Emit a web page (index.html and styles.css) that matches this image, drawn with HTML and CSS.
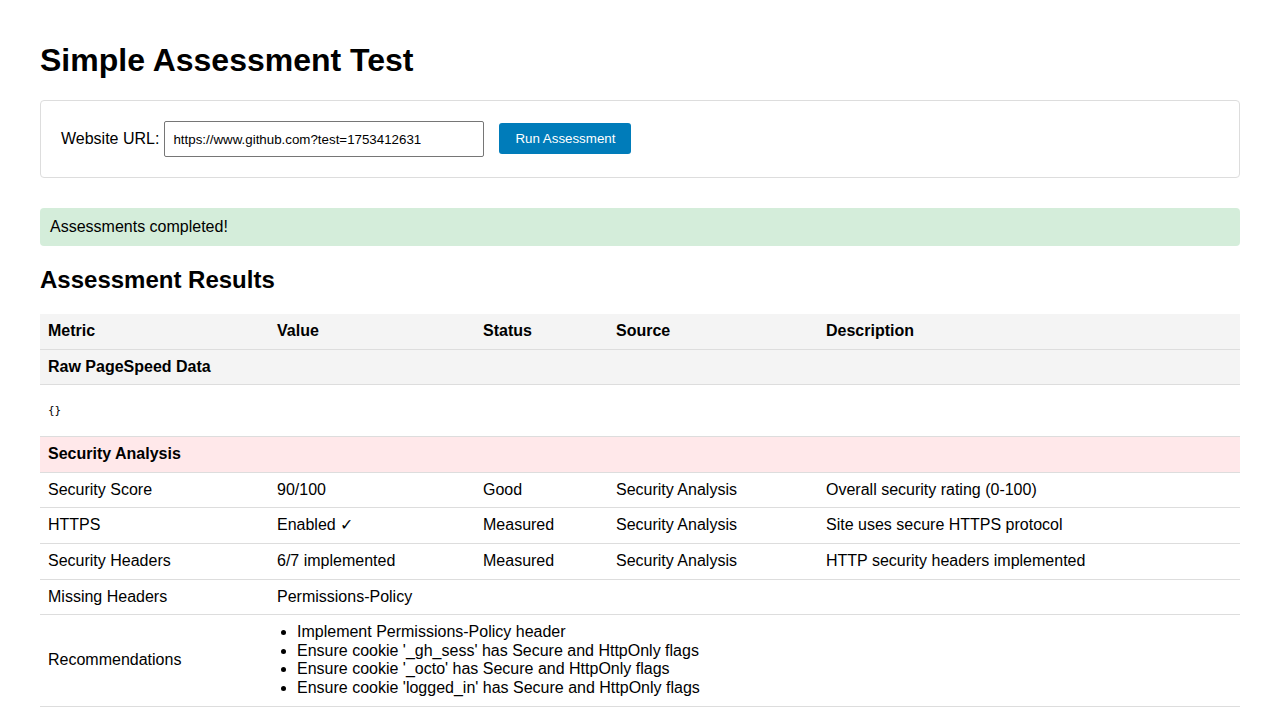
FILE: index.html
```html
<!DOCTYPE html>
<html lang="en">
<head>
<meta charset="utf-8">
<title>Simple Assessment Test</title>
<link rel="stylesheet" href="styles.css">
</head>
<body>
<div class="page">
  <h1 class="title">Simple Assessment Test</h1>
  <form class="form-box">
    <label class="url-label" for="url">Website URL:</label>
    <input class="url-input" id="url" type="text" value="https://www.github.com?test=1753412631">
    <button class="run-btn" type="button">Run Assessment</button>
  </form>
  <div class="success">Assessments completed!</div>
  <h2 class="subtitle">Assessment Results</h2>
  <table class="results">
    <colgroup>
      <col class="c-metric">
      <col class="c-value">
      <col class="c-status">
      <col class="c-source">
      <col class="c-desc">
    </colgroup>
    <thead>
      <tr><th>Metric</th><th>Value</th><th>Status</th><th>Source</th><th>Description</th></tr>
    </thead>
    <tbody>
      <tr class="section section-raw"><td colspan="5">Raw PageSpeed Data</td></tr>
      <tr><td colspan="5"><pre class="raw">{}</pre></td></tr>
      <tr class="section section-security"><td colspan="5">Security Analysis</td></tr>
      <tr><td>Security Score</td><td>90/100</td><td>Good</td><td>Security Analysis</td><td>Overall security rating (0-100)</td></tr>
      <tr><td>HTTPS</td><td>Enabled ✓</td><td>Measured</td><td>Security Analysis</td><td>Site uses secure HTTPS protocol</td></tr>
      <tr><td>Security Headers</td><td>6/7 implemented</td><td>Measured</td><td>Security Analysis</td><td>HTTP security headers implemented</td></tr>
      <tr><td>Missing Headers</td><td>Permissions-Policy</td><td></td><td></td><td></td></tr>
      <tr>
        <td>Recommendations</td>
        <td colspan="4">
          <ul class="recs">
            <li>Implement Permissions-Policy header</li>
            <li>Ensure cookie '_gh_sess' has Secure and HttpOnly flags</li>
            <li>Ensure cookie '_octo' has Secure and HttpOnly flags</li>
            <li>Ensure cookie 'logged_in' has Secure and HttpOnly flags</li>
          </ul>
        </td>
      </tr>
    </tbody>
  </table>
</div>
</body>
</html>
```

FILE: styles.css
```css
html, body {
  margin: 0;
  padding: 0;
  background: #fff;
  color: #000;
  font-family: "Liberation Sans", Arial, sans-serif;
  font-size: 16px;
}

.page {
  padding: 0 40px 40px;
}

.title {
  font-size: 32px;
  font-weight: bold;
  margin: 42px 0 21px;
}

.form-box {
  border: 1px solid #ddd;
  border-radius: 4px;
  padding: 20px;
  margin: 0 0 30px;
  display: flex;
  align-items: center;
}

.url-label {
  margin-right: 5px;
}

.url-input {
  box-sizing: border-box;
  width: 320px;
  height: 36px;
  padding: 0 8px;
  font-family: "Liberation Sans", Arial, sans-serif;
  font-size: 13.33px;
  color: #000;
  border: 1px solid #767676;
  border-radius: 2px;
}

.run-btn {
  margin-left: 15px;
  margin-bottom: 1px;
  height: 31px;
  padding: 0 16px;
  background: #007cba;
  color: #fff;
  border: none;
  border-radius: 3px;
  font-family: "Liberation Sans", Arial, sans-serif;
  font-size: 13.33px;
}

.success {
  background: #d4edda;
  border-radius: 4px;
  padding: 10px;
  line-height: 18px;
}

.subtitle {
  font-size: 24px;
  font-weight: bold;
  margin: 20px 0 20px;
}

.results {
  width: 100%;
  border-collapse: collapse;
  table-layout: fixed;
}

.c-metric { width: 229px; }
.c-value { width: 206px; }
.c-status { width: 133px; }
.c-source { width: 210px; }

.results th,
.results td {
  padding: 8px;
  text-align: left;
  vertical-align: middle;
  border-bottom: 1px solid #ddd;
  line-height: 18.6px;
}

.results th {
  background: #f4f4f4;
  font-weight: bold;
}

.section td {
  font-weight: bold;
}

.section-raw td {
  background: #f4f4f4;
}

.section-security td {
  background: #ffe8ea;
}

.raw {
  font-family: "DejaVu Sans Mono", "Liberation Mono", monospace;
  font-size: 11px;
  line-height: 13px;
  margin: 11px 0;
}

.recs {
  margin: 0;
  padding-left: 20px;
}
```
